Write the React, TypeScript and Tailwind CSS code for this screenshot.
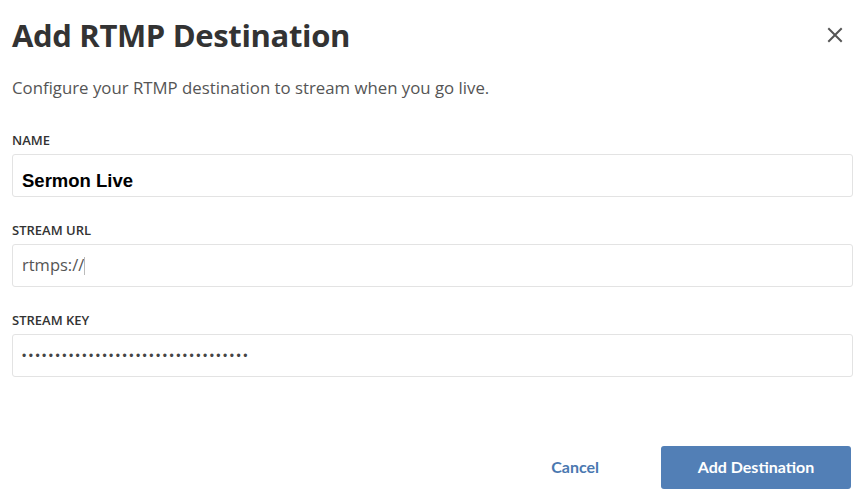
import React from "react";

export default function App() {
  return (
    <div className="w-[865px] h-[500px] bg-white relative" style={{ fontFamily: '"Open Sans", sans-serif' }}>
      <div className="flex items-start justify-between pl-[12px] pr-[22px] pt-[14px]">
        <h1 className="text-[31px] leading-[42px] font-bold text-[#333333] tracking-[-0.35px]">Add RTMP Destination</h1>
        <button className="mt-[13px] w-[16px] h-[16px] flex items-center justify-center text-[#555555]">
          <svg width="16" height="16" viewBox="0 0 16 16" fill="none" stroke="currentColor" strokeWidth="2" strokeLinecap="square">
            <path d="M2 2 L14 14 M14 2 L2 14" />
          </svg>
        </button>
      </div>
      <p className="pl-[12px] mt-[20px] text-[16.8px] leading-[24px] text-[#555555]">
        Configure your RTMP destination to stream when you go live.
      </p>
      <div className="px-[12px] mt-[32px] flex flex-col gap-[25px]">
        <div className="flex flex-col">
          <label className="text-[13px] leading-[16px] font-semibold text-[#333333] mb-[6px]">NAME</label>
          <div className="h-[43px] border border-[#e3e3e3] rounded-[3px] flex items-center px-[9px] pt-[10px]">
            <span className="text-[18.5px] font-bold text-black" style={{ fontFamily: '"Liberation Sans", Arial, sans-serif' }}>Sermon Live</span>
          </div>
        </div>
        <div className="flex flex-col">
          <label className="text-[13px] leading-[16px] font-semibold text-[#333333] mb-[6px]">STREAM URL</label>
          <div className="h-[43px] border border-[#e3e3e3] rounded-[3px] flex items-center px-[9px]">
            <span className="text-[16.5px] text-[#555555]">rtmps://</span>
            <span className="w-px h-[18px] bg-[#bbbbbb]" />
          </div>
        </div>
        <div className="flex flex-col">
          <label className="text-[13px] leading-[16px] font-semibold text-[#333333] mb-[6px]">STREAM KEY</label>
          <div className="h-[43px] border border-[#e3e3e3] rounded-[3px] flex items-center px-[9px]">
            <span className="text-[12px] text-[#444444] tracking-[2.5px]" style={{ fontFamily: '"Liberation Sans", Arial, sans-serif' }}>{"•".repeat(34)}</span>
          </div>
        </div>
      </div>
      <div className="absolute left-0 right-0 top-[446px] flex justify-end items-center pr-[14px]" style={{ fontFamily: 'Lato, sans-serif' }}>
        <button className="text-[16px] font-bold text-[#4a78b0] mr-[62px] -mt-[2px]">Cancel</button>
        <button className="w-[190px] h-[43px] rounded-[3px] bg-[#527fb6] text-white text-[16px] font-bold pb-[2px]">Add Destination</button>
      </div>
    </div>
  );
}
